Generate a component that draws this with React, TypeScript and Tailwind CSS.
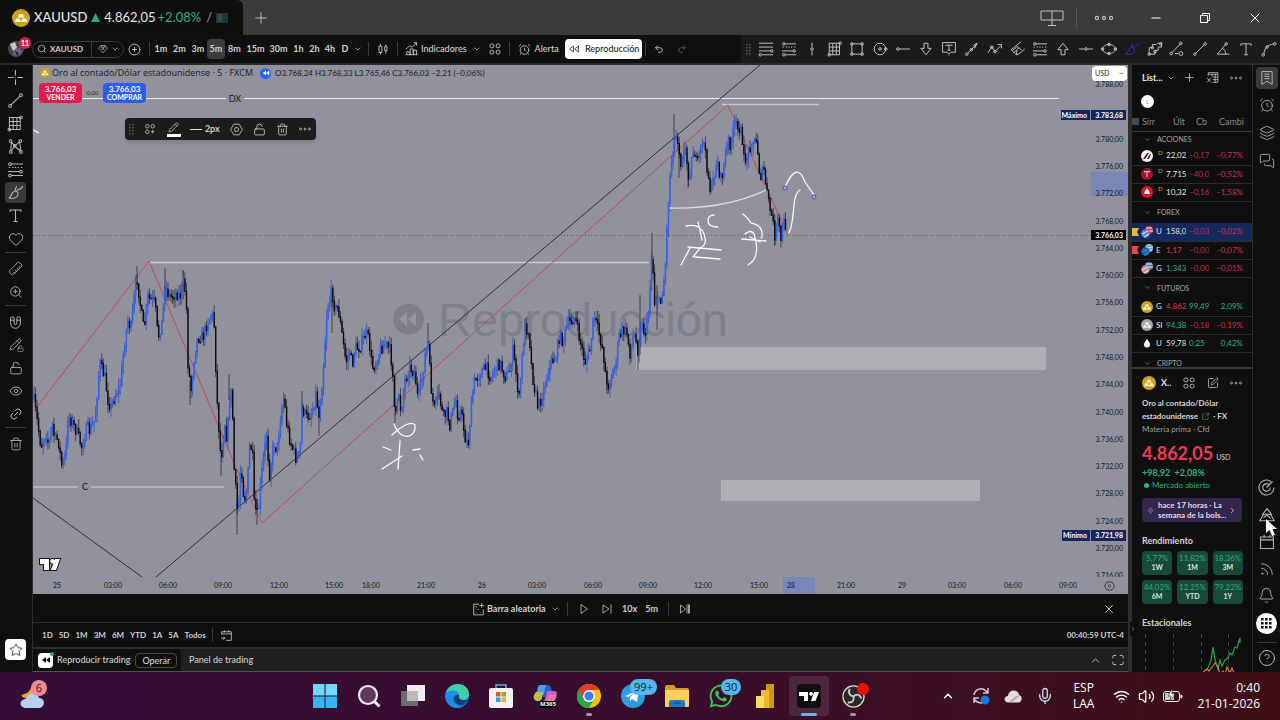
import { ReactNode, useState } from "react";
import clsx from "clsx";
import {
  AlarmClock,
  ChevronDown,
  ChevronRight,
  ChevronUp,
  CircleHelp,
  CirclePlus,
  Eye,
  Heart,
  Layers,
  Link2,
  LockOpen,
  Magnet,
  MessagesSquare,
  Mic,
  Minus,
  Pencil,
  Plus,
  Redo2,
  Rss,
  Ruler,
  Search,
  SquarePen,
  Star,
  Trash2,
  Undo2,
  Volume2,
  Wifi,
  X,
  Zap,
  ZoomIn,
  Bell,
} from "lucide-react";
import { FaWhatsapp } from "react-icons/fa";

type Point = [number, number];

// line glyphs on a 28 unit grid: strokes plus small ring handles
const glyphs: Record<string, { d: string; dots?: Point[] }> = {
  cross: { d: "M14 3v8M14 17v8M3 14h8M17 14h8M14 13.5v1" },
  trend: { d: "M7.5 20.5l13-13", dots: [[6, 22], [22, 6]] },
  grid: { d: "M5 5h16v18H5zM5 11h16M5 17h16M10.500 5v18M16 5v18", dots: [[22, 5], [5, 23]] },
  pattern: { d: "M7 20L8 8l5 5 7-6 2 13M7 21l6-7 9 7", dots: [[7, 22], [7, 6], [13, 13], [21, 6], [22, 22]] },
  levels: { d: "M3 5h22M3 11h22M3 17h18M8 23h17", dots: [[23, 17], [5, 23]] },
  range: { d: "M8 6h17M4 11h2M9 11h2M13 11h2M17 11h2M22 11h2M3 17h17M8 23h17", dots: [[6, 6], [22, 17], [6, 23]] },
  brush: { d: "M4 22c4 0 3-9 9-10 4-1 6 4 4 7-2 4-9 4-13 3zM16 12c0-4 3 1 9-7M14 12c-1-3 1-6 2-7" },
  text: { d: "M6 9V6h16v3M14 6v17M11 23h6" },
  vline: { d: "M14 4v7M14 17v7", dots: [[14, 14]] },
  rect: { d: "M6 6h16v16H6z", dots: [[6, 6], [22, 6], [6, 22], [22, 22]] },
  circle: { d: "M23 14a9 9 0 1 1-18 0a9 9 0 1 1 18 0z", dots: [[14, 14], [23, 14]] },
  hray: { d: "M8 14h17", dots: [[6, 14]] },
  down: { d: "M11 5h6v8h5l-8 10-8-10h5z" },
  up: { d: "M11 23h6v-8h5L14 5 6 15h5z" },
  note: { d: "M4 4h20v15h-7l-3 3-3-3H4zM9 9V8h10v1M14 8v8M12 16h4M14 24v1" },
  arrow: { d: "M7.500 20.500L22 6M15 9l7-4-4 8", dots: [[6, 22], [13, 15]] },
  wave: { d: "M3 20l6-9 5 7 9-9M18 7h6v6", dots: [[9, 11], [14, 18]] },
  fan: { d: "M20 3L5 15l8 8c4 0 8-5 13-9M7 16l8-6 6 6M9 20l8-8M13 23l1-7" },
  hline: { d: "M3 14h8M17 14h8", dots: [[14, 14]] },
  ellipse: { d: "M24 14c0 4-5 7-10 7S4 18 4 14s5-7 10-7 10 3 10 7z", dots: [[4, 14], [24, 14], [14, 7], [14, 21]] },
  path: { d: "M5 22V12h5V7h6l2-2h6v6h-5v5h-5v6z", dots: [[5, 22], [10, 12], [14, 18], [23, 6]] },
  channel: { d: "M6 20L19 6M11 21h5M23 21a3 3 0 1 1-6 0a3 3 0 1 1 6 0z", dots: [[5, 21], [20, 5]] },
  angle: { d: "M24 22H5L19 6M13 13c4 2 5 5 5 9", dots: [[19, 6]] },
  arc: { d: "M6 22C7 12 11 8 22 6", dots: [[5, 23], [11, 11], [23, 6]] },
  candles: { d: "M7 9h5v11H7zM9.500 5v4M9.500 20v4M17 10h4v7h-4zM19 6v4M19 17v5" },
  indicators: { d: "M5 24v-5h5v5M11 24V14h5v10M17 24v-8h5v8M3 24h21M4 14l6-6 4 3 8-8M17 3h5v5" },
  appsRound: {
    d: "M12 8.500a3.500 3.500 0 1 1-7 0a3.500 3.500 0 1 1 7 0zM23 8.500a3.500 3.500 0 1 1-7 0a3.500 3.500 0 1 1 7 0zM12 19.500a3.500 3.500 0 1 1-7 0a3.500 3.500 0 1 1 7 0zM23 19.500a3.500 3.500 0 1 1-7 0a3.500 3.500 0 1 1 7 0z",
  },
  addTemplate: {
    d: "M12 8.500a3.500 3.500 0 1 1-7 0a3.500 3.500 0 1 1 7 0zM23 8.500a3.500 3.500 0 1 1-7 0a3.500 3.500 0 1 1 7 0zM12 19.500a3.500 3.500 0 1 1-7 0a3.500 3.500 0 1 1 7 0zM19.500 16v7M16 19.500h7",
  },
  settings: { d: "M9 4h10l6 10-6 10H9L3 14zM18 14a4 4 0 1 1-8 0a4 4 0 1 1 8 0z" },
  more: { d: "", dots: [[5, 14], [14, 14], [23, 14]] },
  gem: { d: "M9 6h10l5 6-10 11L4 12zM11 10l3 6 3-6M9 6l2 4h6l2-4" },
  rewind: { d: "M13 8v12l-8-6zM23 8v12l-8-6z" },
  table: { d: "M6 11V5h18v18H14M6 8h18M24 13H14M24 18H14M19 8v15M13 8v4M4 15l7 8M11 15l-7 8" },
  bookmark: { d: "M6 4h16v20l-8-5-8 5zM10 8h8M10 11.500h8M10 15h8" },
  radar: { d: "M24 14a10 10 0 1 1-4-8M19 14a5 5 0 1 1-2-4M14 14l8-8" },
  pine: { d: "M14 5l-6 8h12zM9 13l-5 9h20l-5-9M9 18l5-4 5 5" },
  calendar: { d: "M5 7h18v16H5zM5 11h18M10 4v4M18 4v4" },
  calendarGo: { d: "M5 12V7h18v16H13M5 11h18M10 4v4M18 4v4M4 19h7M8 16l3 3-3 3" },
  random: { d: "M15 4H5v20h18V14M20 2v9M15.500 6.500h9M8 8l3 2M13 13l1 2M18 19l1 1M8 18l2 2M9 13v1" },
  play: { d: "M8 5v18l13-9z" },
  step: { d: "M6 6v16l12-8zM22 5v18" },
  live: { d: "M5 6v16l10-8zM18 5v18M21 5v18M23 5v18" },
  maximize: { d: "M5 11V8q0-2 2-2h4M17 6h4q2 0 2 2v3M23 17v3q0 2-2 2h-4M11 22H7q-2 0-2-2v-3" },
  external: { d: "M12 6H5v17h17v-8M16 4h8v8M24 4L14 14" },
};

function Glyph({ name, className = "size-[18px]" }: { name: string; className?: string }) {
  const glyph = glyphs[name];
  return (
    <svg viewBox="0 0 28 28" className={clsx("shrink-0", className)} fill="none" stroke="currentColor" strokeWidth="1.5" aria-hidden="true">
      <path d={glyph.d} />
      {glyph.dots?.map(([x, y], i) => <circle key={i} cx={x} cy={y} r="2" />)}
    </svg>
  );
}

function GoldIcon({ className, color = "#cfa21c" }: { className: string; color?: string }) {
  return (
    <svg viewBox="0 0 20 20" className={clsx("shrink-0", className)} aria-hidden="true">
      <circle cx="10" cy="10" r="10" fill={color} />
      <path d="M8 5.500h4l1.500 4h-7zM4.500 10.500h4l1.500 4H3zM11.500 10.500h4l1.500 4h-7z" fill="#fff6da" />
    </svg>
  );
}

function Divider() {
  return <span className="h-[14px] w-px shrink-0 bg-[#3c3c3c]" />;
}

function TitleBar() {
  return (
    <header className="flex h-[35px] shrink-0 bg-[#3b3b3b] text-[#c4c4c4]">
      <div className="flex w-[243px] shrink-0 items-center rounded-tr-md bg-[#0e0e0e] pl-3 text-[13px] text-[#e4e4e4]">
        <GoldIcon className="size-[18px]" />
        <span className="ml-1 font-medium">XAUUSD</span>
        <svg viewBox="0 0 10 10" className="mx-1 size-[9px]" aria-hidden="true">
          <path d="M5 0l5 10H0z" fill="#22ab7d" />
        </svg>
        <span>4.862,05</span>
        <span className="ml-[2px] text-[#2bb17f]">+2.08%</span>
        <span className="ml-[5px] text-[#9a9a9a]">/</span>
        <svg viewBox="0 0 12 10" className="ml-1 h-[10px] w-3" aria-hidden="true">
          <path d="M0 0h12v10H0z" fill="#26323a" />
          <path d="M2 1h4v8H2z" fill="#2f4d50" />
        </svg>
      </div>
      <button type="button" aria-label="Nueva pestaña" className="flex w-[35px] items-center justify-center">
        <Plus className="size-[18px]" strokeWidth={1.2} />
      </button>
      <div className="ml-auto flex items-center">
        <button type="button" aria-label="Pantallas" className="flex w-10 justify-center">
          <svg viewBox="0 0 24 18" className="h-[18px] w-6" fill="none" stroke="currentColor" aria-hidden="true">
            <path d="M1 2h22v9H1zM12 2v14M8 16.500h8" />
          </svg>
        </button>
        <span className="ml-1 h-5 w-px bg-[#555]" />
        <button type="button" aria-label="Más" className="flex w-[54px] justify-center">
          <Glyph name="more" className="size-[22px]" />
        </button>
        <button type="button" aria-label="Minimizar" className="flex w-[49px] justify-center text-white">
          <Minus className="size-[14px]" />
        </button>
        <button type="button" aria-label="Restaurar" className="flex w-[50px] justify-center text-white">
          <svg viewBox="0 0 12 12" className="size-3" fill="none" stroke="currentColor" aria-hidden="true">
            <path d="M1.500 3.500h7v7h-7zM3.500 3V1.500h7v7H9" />
          </svg>
        </button>
        <button type="button" aria-label="Cerrar" className="flex w-[50px] justify-center text-white">
          <X className="size-4" strokeWidth={1.5} />
        </button>
      </div>
    </header>
  );
}

const intervals = [
  { label: "1m", width: "w-[18px]" },
  { label: "2m", width: "w-[19px]" },
  { label: "3m", width: "w-[18px]" },
  { label: "5m", width: "w-[18px]" },
  { label: "8m", width: "w-[19px]" },
  { label: "15m", width: "w-[23px]" },
  { label: "30m", width: "w-[23px]" },
  { label: "1h", width: "w-[17px]" },
  { label: "2h", width: "w-[15px]" },
  { label: "4h", width: "w-[16px]" },
  { label: "D", width: "w-[14px]" },
];

const favourites = [
  "levels", "range", "vline", "grid", "rect", "circle", "hray", "down", "note", "arrow", "wave", "fan",
  "range", "up", "hline", "ellipse", "brush", "path", "channel", "trend", "angle", "text", "arc",
];

function Toolbar() {
  const [interval, setActiveInterval] = useState("5m");

  return (
    <div className="flex h-7 shrink-0 items-center bg-[#0f0f0f] text-[9px] font-bold text-[#cfcfcf]">
      <button type="button" aria-label="Perfil" className="relative ml-2 size-4 shrink-0">
        <svg viewBox="0 0 16 16" className="size-4" aria-hidden="true">
          <circle cx="8" cy="8" r="8" fill="#4a4350" />
          <path d="M2 3l5-2 2 6-4 3z" fill="#d0c0b8" />
          <path d="M6 9l6-2 2 4-4 4-5-1z" fill="#6f6488" />
          <path d="M7 10l4 2-2 3z" fill="#1d1722" />
        </svg>
        <span className="absolute -top-1 left-[11px] flex size-3 items-center justify-center rounded-full bg-[#d6204e] text-[7px] text-white">
          11
        </span>
      </button>
      <div className="ml-2 flex h-[17px] w-[92px] shrink-0 items-center rounded-full border border-[#3a3a3a]">
        <button type="button" className="flex h-full w-[59px] items-center gap-[3px] border-r border-[#3a3a3a] pl-1 text-[8px]">
          <Search className="size-[10px] shrink-0" strokeWidth={1.8} />
          XAUUSD
        </button>
        <button type="button" aria-label="Símbolos" className="flex flex-1 items-center justify-center gap-[2px]">
          <Glyph name="gem" className="size-3" />
          <ChevronDown className="size-2" />
        </button>
      </div>
      <button type="button" aria-label="Comparar" className="flex w-[21px] justify-center">
        <CirclePlus className="size-[13px]" strokeWidth={1.6} />
      </button>
      <span className="ml-1 mr-[2px]">
        <span className="block h-[14px] w-px bg-[#3c3c3c]" />
      </span>
      {intervals.map(({ label, width }) => (
        <button
          key={label}
          type="button"
          onClick={() => setActiveInterval(label)}
          className={clsx("h-5 shrink-0 rounded text-center", width, interval === label && "bg-[#3d3d3d]")}
        >
          {label}
        </button>
      ))}
      <button type="button" aria-label="Más intervalos" className="mr-1 flex w-3 justify-center">
        <ChevronDown className="size-2" />
      </button>
      <Divider />
      <button type="button" aria-label="Velas" className="flex w-7 justify-center">
        <Glyph name="candles" className="size-4" />
      </button>
      <Divider />
      <button type="button" className="ml-[6px] flex shrink-0 items-center gap-px font-medium">
        <Glyph name="indicators" className="size-4" />
        Indicadores
      </button>
      <button type="button" aria-label="Favoritos" className="ml-[2px] flex w-4 justify-center">
        <ChevronDown className="size-2" />
      </button>
      <button type="button" aria-label="Plantillas" className="flex w-[21px] justify-center">
        <Glyph name="appsRound" className="size-4" />
      </button>
      <span className="ml-[3px]">
        <span className="block h-[14px] w-px bg-[#3c3c3c]" />
      </span>
      <button type="button" className="ml-2 flex shrink-0 items-center gap-1 font-medium">
        <AlarmClock className="size-[13px]" strokeWidth={1.5} />
        Alerta
      </button>
      <button
        type="button"
        className="ml-[6px] mr-[3px] flex h-5 w-[77px] shrink-0 items-center justify-center gap-1 rounded bg-white font-medium text-[#1b1b1b]"
      >
        <Glyph name="rewind" className="size-[14px]" />
        Reproducción
      </button>
      <Divider />
      <button type="button" aria-label="Deshacer" className="flex w-[26px] justify-center">
        <Undo2 className="size-[10px]" />
      </button>
      <button type="button" aria-label="Rehacer" className="flex w-5 justify-center text-[#5c5c5c]">
        <Redo2 className="size-[10px]" />
      </button>
      <div className="ml-auto flex h-7 w-[539px] shrink-0 items-center bg-[#1b1b1b] pl-[5px]">
        <Grip />
        <div className="ml-1 flex flex-1 justify-between">
          {favourites.map((name, i) => (
            <button
              key={i}
              type="button"
              aria-label={name}
              className={clsx("flex w-[22px] justify-center", name === "brush" ? "text-[#3434c4]" : "text-[#c4c4c4]")}
            >
              <Glyph name={name} className="size-[18px]" />
            </button>
          ))}
        </div>
      </div>
    </div>
  );
}

function Grip() {
  return (
    <svg viewBox="0 0 5 11" className="h-[11px] w-[5px] shrink-0" fill="#5a5a5a" aria-hidden="true">
      <path d="M0 0h1.500v1.500H0zM3 0h1.500v1.500H3zM0 3h1.500v1.500H0zM3 3h1.500v1.500H3zM0 6h1.500v1.500H0zM3 6h1.500v1.500H3zM0 9h1.500v1.500H0zM3 9h1.500v1.500H3z" />
    </svg>
  );
}

function Tool({ label, active, children }: { label: string; active?: boolean; children: ReactNode }) {
  return (
    <button type="button" aria-label={label} className="flex h-[23px] items-center justify-center">
      <span className={clsx("flex size-[21px] items-center justify-center rounded", active && "bg-[#3a3a3a]")}>{children}</span>
    </button>
  );
}

function DrawingTools() {
  return (
    <aside className="flex w-[33px] shrink-0 flex-col border-r border-[#2c2c2c] bg-[#0f0f0f] pr-px pt-px text-[#b8b8b8]">
      {["cross", "trend", "grid", "pattern", "range", "brush", "text"].map((name) => (
        <Tool key={name} label={name} active={name === "brush"}>
          <Glyph name={name} className="size-[19px]" />
        </Tool>
      ))}
      <Tool label="Iconos">
        <Heart className="size-4" strokeWidth={1.3} />
      </Tool>
      <span className="mx-[5px] mb-1 mt-[2px] h-px bg-[#3a3a3a]" />
      <Tool label="Medir">
        <Ruler className="size-[15px] rotate-90" strokeWidth={1.4} />
      </Tool>
      <Tool label="Ampliar">
        <ZoomIn className="size-[14px]" strokeWidth={1.5} />
      </Tool>
      <span className="mx-[5px] mb-1 mt-[2px] h-px bg-[#3a3a3a]" />
      <Tool label="Imán">
        <Magnet className="size-[15px] rotate-[135deg]" strokeWidth={1.4} />
      </Tool>
      <Tool label="Modo dibujo">
        <span className="relative">
          <Pencil className="size-[13px]" strokeWidth={1.5} />
          <LockOpen className="absolute -bottom-px -right-[2px] size-[7px]" />
        </span>
      </Tool>
      <Tool label="Bloquear">
        <LockOpen className="size-[14px]" strokeWidth={1.5} />
      </Tool>
      <Tool label="Ocultar">
        <Eye className="size-[14px]" strokeWidth={1.5} />
      </Tool>
      <Tool label="Vincular">
        <Link2 className="size-[14px] -rotate-45" strokeWidth={1.6} />
      </Tool>
      <span className="mx-[5px] mb-1 mt-[2px] h-px bg-[#3a3a3a]" />
      <Tool label="Eliminar">
        <Trash2 className="size-[14px]" strokeWidth={1.4} />
      </Tool>
      <button
        type="button"
        aria-label="Barra de favoritos"
        className="mx-auto mb-3 mt-auto flex size-[21px] items-center justify-center rounded bg-white text-[#1b1b1b]"
      >
        <Star className="size-[14px]" strokeWidth={1.4} />
      </button>
    </aside>
  );
}

const priceTrack: Point[] = [
  [34, 400], [36, 413], [41, 446], [46, 433], [49, 445], [52, 422], [55, 440], [58, 438], [62, 467], [66, 453],
  [68, 415], [71, 420], [76, 430], [80, 441], [82, 447], [87, 427], [90, 431], [95, 420], [98, 383], [100, 363],
  [105, 378], [108, 400], [111, 407], [115, 395], [120, 387], [125, 340], [128, 320], [131, 328], [134, 300],
  [137, 277], [141, 310], [144, 330], [148, 297], [155, 303], [158, 338], [162, 322], [165, 286], [170, 297],
  [176, 293], [180, 296], [183, 282], [186, 293], [188, 363], [191, 390], [195, 350], [198, 337], [203, 337],
  [207, 323], [212, 313], [214, 320], [217, 400], [221, 460], [225, 423], [227, 440], [230, 393], [232, 393],
  [234, 467], [238, 517], [241, 460], [244, 500], [247, 490], [250, 440], [253, 460], [254, 503], [258, 517],
  [261, 480], [264, 453], [267, 430], [269, 478], [274, 443], [277, 450], [281, 413], [284, 395], [286, 420],
  [290, 440], [296, 458], [300, 455], [302, 407], [306, 417], [312, 413], [316, 393], [319, 417], [323, 373],
  [327, 310], [332, 290], [335, 310], [338, 307], [341, 327], [346, 362], [350, 350], [352, 366], [355, 348],
  [360, 347], [366, 333], [369, 340], [372, 367], [375, 365], [380, 350], [385, 343], [390, 350], [393, 373],
  [395, 422], [399, 393], [401, 412], [405, 380], [410, 367], [415, 373], [418, 400], [422, 380], [425, 357],
  [428, 342], [431, 387], [434, 410], [439, 393], [443, 417], [447, 412], [450, 425], [453, 412], [456, 400],
  [458, 417], [461, 410], [465, 437], [468, 445], [471, 410], [474, 383], [477, 377], [486, 367], [491, 377],
  [496, 367], [500, 363], [506, 378], [510, 370], [513, 350], [516, 373], [519, 400], [522, 360], [525, 327],
  [529, 330], [532, 373], [538, 407], [543, 393], [550, 363], [556, 357], [559, 337], [563, 340], [568, 323],
  [575, 317], [580, 340], [585, 362], [590, 350], [594, 315], [599, 333], [603, 350], [607, 388], [615, 367],
  [619, 337], [623, 330], [627, 333], [630, 353], [634, 333], [638, 350], [641, 323], [645, 333], [648, 320],
  [652, 250], [655, 310], [657, 293], [660, 307], [663, 287], [665, 273], [668, 207], [670, 177], [673, 147],
  [677, 133], [681, 163], [685, 147], [689, 177], [694, 147], [697, 167], [703, 138], [708, 173], [711, 194],
  [717, 160], [721, 180], [725, 160], [728, 140], [731, 145], [735, 123], [738, 130], [741, 122], [743, 160],
  [747, 157], [751, 142], [757, 142], [760, 177], [764, 170], [768, 200], [772, 217], [775, 236], [778, 220],
  [781, 240], [783, 223], [785, 222], [787, 236],
];

// isolated long wicks: x, top, bottom
const longWicks: [number, number, number][] = [
  [137, 266, 290], [165, 268, 300], [183, 270, 300], [190, 380, 405], [221, 455, 476], [229, 374, 400], [237, 500, 535],
  [257, 500, 525], [302, 391, 410], [319, 412, 436], [332, 290, 333], [395, 375, 423], [428, 323, 345], [439, 384, 400],
  [525, 318, 330], [607, 370, 394], [640, 295, 355], [652, 233, 260], [657, 285, 330], [674, 114, 150], [679, 150, 178],
  [688, 165, 188], [775, 220, 245], [638, 340, 370],
];

const buildCandles = () => {
  let seed = 7;
  const random = () => {
    seed = (seed * 16807) % 2147483647;
    return seed / 2147483647;
  };

  const out = { upBody: "", downBody: "", upWick: "", downWick: "" };
  let index = 0;
  let previous = priceTrack[0][1];
  for (let x = 34; x <= 787; x += 1.54) {
    while (index < priceTrack.length - 2 && priceTrack[index + 1][0] < x) index++;
    const [x0, y0] = priceTrack[index];
    const [x1, y1] = priceTrack[index + 1];
    const target = y0 + ((y1 - y0) * (x - x0)) / (x1 - x0);
    const close = target + (random() - 0.5) * 12;
    const high = Math.min(previous, close) - random() * 9;
    const low = Math.max(previous, close) + random() * 9;
    const at = x.toFixed(1);
    const body = `M${at} ${previous.toFixed(1)}V${(close + (close < previous ? -1 : 1)).toFixed(1)}`;
    const wick = `M${at} ${high.toFixed(1)}V${low.toFixed(1)}`;
    if (close < previous) {
      out.upBody += body;
      out.upWick += wick;
    } else {
      out.downBody += body;
      out.downWick += wick;
    }
    previous = close;
  }
  return out;
};

const candles = buildCandles();

const prices: [string, number][] = [
  ["3.788,00", 87], ["3.780,00", 142], ["3.776,00", 169], ["3.772,00", 196], ["3.768,00", 224], ["3.764,00", 251],
  ["3.760,00", 278], ["3.756,00", 305], ["3.752,00", 333], ["3.748,00", 360], ["3.744,00", 387], ["3.740,00", 415],
  ["3.736,00", 442], ["3.732,00", 469], ["3.728,00", 496], ["3.724,00", 524], ["3.720,00", 551], ["3.716,00", 578],
];

const times: [string, number][] = [
  ["25", 57], ["03:00", 113], ["06:00", 168], ["09:00", 223], ["12:00", 279], ["15:00", 334], ["18:00", 371], ["21:00", 426],
  ["26", 482], ["03:00", 537], ["06:00", 593], ["09:00", 648], ["12:00", 703], ["15:00", 759], ["28", 791], ["21:00", 846],
  ["29", 902], ["03:00", 957], ["06:00", 1013], ["09:00", 1068],
];

function PriceChart() {
  return (
    <svg viewBox="33 65 1095 529" preserveAspectRatio="xMinYMin slice" className="block h-full w-full" role="img" aria-label="Gráfico de XAUUSD">
      <path d="M33 65h1095v529H33z" fill="#91929c" />

      <g fill="#7e7f89">
        <path d="M424 319a15.500 15.500 0 1 1-31 0a15.500 15.500 0 1 1 31 0z" />
        <path d="M407 312v14l-8-7zM416 312v14l-8-7z" fill="#94959f" />
        <text x="438" y="336" fontSize="47" fontFamily="Liberation Sans, sans-serif">
          Reproducción
        </text>
      </g>

      <path d="M636 347h410v23H636zM721 480h259v21H721z" fill="#afb0b5" />

      <path d="M33 235.500H1090" stroke="#5d5e66" strokeDasharray="1 2" />
      <g stroke="#e9e9ee">
        <path d="M33 98.500h193M244 98.500h815" strokeWidth="1.200" />
        <path d="M149 262.500h500M722 104.500h97" stroke="#c9c9cf" strokeWidth="1.700" />
        <path d="M33 487h45M91 487h133" stroke="#bfc0c7" strokeWidth="1.700" />
        <path d="M33 130l6 3" strokeWidth="1.500" />
      </g>

      <g fill="none" strokeWidth="0.900">
        <path d="M33 498l109 79M156 577L760 65" stroke="#26262c" />
        <path d="M34 411L149 261l88 209 25 53L728 105l60 130" stroke="#c73f58" />
      </g>

      <g fill="none">
        <path d={candles.upWick} stroke="#3350b8" strokeWidth="0.800" />
        <path d={candles.downWick} stroke="#25262f" strokeWidth="0.700" />
        <path d={longWicks.map(([x, top, bottom]) => `M${x} ${top}V${bottom}`).join("")} stroke="#2b2d3a" strokeWidth="0.800" />
        <path d={candles.upBody} stroke="#3560ee" strokeWidth="1.500" />
        <path d={candles.downBody} stroke="#0b0c16" strokeWidth="1.400" />
      </g>

      {/* freehand notes */}
      <g fill="none" stroke="#fafafa" strokeWidth="1.300" strokeLinecap="round">
        <path d="M670 208q56 1 96-18" stroke="#dcdce2" />
        <path d="M686 226q14-3 18 8t-4 14l-7 9M698 222q2 9 4 18M714 215q-6 0-6 6t10 6M688 247l33 3M695 257l25 2M690 248l-9 17" />
        <path d="M743 214q5 4 8 9c9 2 12 6 11 14l-1 1M745 234q6-5 9 0 4 11 2 20-1 7-8 11M742 239l24 2M750 237l10 5" />
        <path d="M789 233c7-15 2-38 11-43M785 187q12-27 20-5l9 13" />
        <path d="M394 424q3 8 8 11c8 4 14-2 13-10-4-5-16 3-23 10M400 441l-2 28M383 447l8 3M382 469l20-13M413 450l7-1M420 455l3 5" />
      </g>
      <g fill="#aab0d4" stroke="#4453a8">
        <circle cx="785" cy="188" r="2" />
        <circle cx="814" cy="197" r="2" />
      </g>

      <g fontSize="9" fill="#16161a" textAnchor="middle">
        <text x="235" y="102">DX</text>
        <text x="85" y="490">C</text>
      </g>

      <path d="M1091 172h37v24h-37zM783 577h32v17h-32z" fill="#7b86b8" />
      <g fontSize="7" fill="#16161a" textAnchor="end">
        {prices.map(([price, y]) => (
          <text key={price} x="1123" y={y}>
            {price}
          </text>
        ))}
      </g>
      <path d="M1088 577h40v17h-40z" fill="#91929c" />
      <g fontSize="7" fill="#16161a" textAnchor="middle">
        {times.map(([time, x]) => (
          <text key={x} x={x} y="588">
            {time}
          </text>
        ))}
      </g>
      <path d="M1107 582h5l2.500 4-2.500 4h-5l-2.500-4z" fill="none" stroke="#33343a" strokeWidth="0.900" />
      <circle cx="1109.500" cy="586" r="1.200" fill="none" stroke="#33343a" strokeWidth="0.700" />

      <g fontSize="7" fontWeight="700" fill="#fff" textAnchor="end">
        <path d="M1061 110h65v10h-65zM1062 530h64v11h-64z" fill="#13265f" />
        <path d="M1090.500 110v10M1090.500 530v11" stroke="#7f8db8" />
        <path d="M1091 230h35v10h-35z" fill="#000" />
        <text x="1087" y="118">Máximo</text>
        <text x="1123" y="118">3.783,68</text>
        <text x="1087" y="538">Mínimo</text>
        <text x="1123" y="538">3.721,98</text>
        <text x="1123" y="238">3.766,03</text>
      </g>

      {/* logo */}
      <path d="M40 559h9v11h-5v-6h-4zM52.500 559a2.300 2.300 0 1 1-.1 0zM55 559h5l-4 11h-5z" fill="#fff" stroke="#16161a" strokeWidth="2" paintOrder="stroke" />
    </svg>
  );
}

function ChartArea() {
  return (
    <div className="relative min-h-0 flex-1">
      <PriceChart />
      <div className="absolute left-[7px] top-[2px] text-[#1a1a1f]">
        <div className="flex h-3 items-center whitespace-nowrap">
          <GoldIcon className="mr-[2px] size-[10px]" />
          <span className="font-['Open_Sans',sans-serif] text-[9px]">Oro al contado/Dólar estadounidense · 5 · FXCM</span>
          <span className="ml-[7px] mr-1 flex size-[11px] items-center justify-center rounded-full bg-[#2962ff] text-white">
            <svg viewBox="0 0 10 10" className="size-[8px]" aria-hidden="true">
              <path d="M5 2v6L1 5zM9 2v6L5 5z" fill="#fff" />
            </svg>
          </span>
          <span className="flex gap-[2px] text-[8px]">
            <span>O3.768,24</span>
            <span>H3.768,33</span>
            <span>L3.765,46</span>
            <span>C3.766,03</span>
            <span>−2,21 (−0,06%)</span>
          </span>
        </div>
        <div className="mt-1 flex items-center text-[8px] font-bold leading-2 text-white">
          <button type="button" className="-ml-px h-5 w-[43px] rounded-sm bg-[#e6194b]">
            3.766,03
            <span className="block text-[7px]">VENDER</span>
          </button>
          <span className="w-[21px] text-center text-[6px] font-normal text-[#2b2b30]">0,00</span>
          <button type="button" className="h-5 w-[43px] rounded-sm bg-[#2c5cf5]">
            3.766,03
            <span className="block text-[7px]">COMPRAR</span>
          </button>
        </div>
      </div>

      <div
        role="toolbar"
        className="absolute left-[92px] top-[53px] flex h-[22px] w-[191px] items-center justify-between rounded bg-[#1c1c1c] px-1 text-[9px] font-bold text-[#cfcfcf] shadow-md"
      >
        <Grip />
        <button type="button" aria-label="Plantilla">
          <Glyph name="addTemplate" className="size-[14px]" />
        </button>
        <button type="button" aria-label="Color" className="flex flex-col items-center">
          <Pencil className="size-[11px]" strokeWidth={1.5} />
          <span className="mt-px h-[3px] w-[14px] bg-white" />
        </button>
        <button type="button" className="flex items-center gap-[3px]">
          <span className="h-px w-3 bg-[#e0e0e0]" />
          2px
        </button>
        <button type="button" aria-label="Configuración">
          <Glyph name="settings" className="size-[15px]" />
        </button>
        <button type="button" aria-label="Bloquear">
          <LockOpen className="size-[13px]" strokeWidth={1.5} />
        </button>
        <button type="button" aria-label="Eliminar">
          <Trash2 className="size-[13px]" strokeWidth={1.5} />
        </button>
        <button type="button" aria-label="Más">
          <Glyph name="more" className="size-[14px]" />
        </button>
      </div>

      <div className="absolute right-[1px] top-[1px] flex items-center">
        <select aria-label="Divisa" className="h-[15px] w-[35px] appearance-none rounded-sm bg-white pl-[3px] text-[7px] text-[#1b1b1b]">
          <option>USD</option>
        </select>
        <ChevronDown className="pointer-events-none absolute right-[3px] size-[5px] text-black" strokeWidth={3} />
      </div>
    </div>
  );
}

function BottomBars() {
  return (
    <div className="shrink-0 bg-[#0f0f0f] text-[9px] font-bold text-[#cfcfcf]">
      <div className="flex h-[29px] items-center border-b border-[#2e2e2e] pt-[2px]">
        <div className="ml-[40%] flex items-center">
          <button type="button" className="flex items-center gap-px">
            <Glyph name="random" className="size-[15px]" />
            Barra aleatoria
            <ChevronDown className="ml-1 size-2" />
          </button>
          <span className="ml-[8px] h-[14px] w-px bg-[#3c3c3c]" />
          <button type="button" aria-label="Reproducir" className="flex w-8 justify-center">
            <Glyph name="play" className="size-[14px]" />
          </button>
          <button type="button" aria-label="Adelante" className="flex w-[14px] justify-center">
            <Glyph name="step" className="size-[14px]" />
          </button>
          <button type="button" className="ml-[6px] w-5">10x</button>
          <button type="button" className="ml-[2px] w-5">5m</button>
          <span className="mx-[6px] h-[14px] w-px bg-[#3c3c3c]" />
          <button type="button" aria-label="Tiempo real" className="flex w-5 justify-center">
            <Glyph name="live" className="size-[14px]" />
          </button>
        </div>
        <button type="button" aria-label="Cerrar reproducción" className="ml-auto mr-3">
          <X className="size-[14px]" strokeWidth={1.6} />
        </button>
      </div>
      <div className="flex h-[26px] items-center gap-[6px] border-b-2 border-[#2e2e2e] pl-[9px] text-[8px]">
        {["1D", "5D", "1M", "3M", "6M", "YTD", "1A", "5A", "Todos"].map((range) => (
          <button key={range} type="button">
            {range}
          </button>
        ))}
        <Divider />
        <button type="button" aria-label="Ir a">
          <Glyph name="calendarGo" className="size-[15px]" />
        </button>
        <span className="ml-auto mr-1">00:40:59 UTC-4</span>
      </div>
      <div className="flex h-[23px] items-center border-b border-[#5a4a52] bg-[#202020]">
        <div className="flex h-full w-[148px] items-center bg-[#101010] pl-[5px]">
          <span className="relative mr-1 flex size-[15px] items-center justify-center rounded-sm bg-white">
            <svg viewBox="0 0 10 10" className="size-[10px]" aria-hidden="true">
              <path d="M5 2v6L1 5zM9 2v6L5 5z" fill="#111" />
            </svg>
            <span className="absolute -right-px -top-px size-1 rounded-full bg-[#22ab7d]" />
          </span>
          <span className="font-medium">Reproducir trading</span>
          <button type="button" className="ml-[5px] h-[15px] w-[42px] rounded border border-[#4a4a4a] font-medium">
            Operar
          </button>
        </div>
        <button type="button" className="ml-2 font-medium">Panel de trading</button>
        <button type="button" aria-label="Abrir panel" className="ml-auto mr-2">
          <ChevronUp className="size-[13px]" strokeWidth={1.5} />
        </button>
        <button type="button" aria-label="Maximizar panel" className="mr-[2px]">
          <Glyph name="maximize" className="size-4" />
        </button>
      </div>
    </div>
  );
}

interface Row {
  name: string;
  delayed?: boolean;
  flag?: string;
  icon: ReactNode;
  last: string;
  lastColor: string;
  change: string;
  percent: string;
  up?: boolean;
  selected?: boolean;
}

function Pair({ back, front, stripe }: { back: string; front: string; stripe: string }) {
  return (
    <svg viewBox="0 0 12 12" className="size-3 shrink-0" aria-hidden="true">
      <circle cx="8" cy="4" r="4" fill={back} />
      <path d="M5 2h6M5 5h7" stroke={stripe} />
      <circle cx="4.500" cy="7.500" r="4.200" fill={front} />
      <path d="M1 8l6-3M3 11l5-3" stroke={stripe} />
    </svg>
  );
}

function Coin({ color, d, mark }: { color: string; d: string; mark: string }) {
  return (
    <svg viewBox="0 0 12 12" className="size-3 shrink-0" aria-hidden="true">
      <circle cx="6" cy="6" r="6" fill={color} />
      <path d={d} fill={mark} />
    </svg>
  );
}

const groups: { title: string; height: string; rows: Row[] }[] = [
  {
    title: "ACCIONES",
    height: "h-4",
    rows: [
      { name: "", delayed: true, icon: <Coin color="#f0f0f0" d="M2 9l4-6h2L4 9zM6 9l3-5h1L8 9z" mark="#5b2035" />, last: "22,02", lastColor: "text-[#e0e0e0]", change: "−0,17", percent: "−0,77%" },
      { name: "", delayed: true, icon: <Coin color="#9b1535" d="M3 3h6v1L6.500 4.500V9h-1V4.500L3 4z" mark="#f3b6c2" />, last: "7.715", lastColor: "text-[#e0e0e0]", change: "−40,0", percent: "−0,52%" },
      { name: "", delayed: true, icon: <Coin color="#e0102f" d="M6 2l2 3 1 3H3l1-3z" mark="#fff" />, last: "10,32", lastColor: "text-[#e0e0e0]", change: "−0,16", percent: "−1,58%" },
    ],
  },
  {
    title: "FOREX",
    height: "h-[22px]",
    rows: [
      { name: "U", flag: "#e8b93b", icon: <Pair back="#d8334b" front="#5a86d8" stripe="#f4f4f4" />, last: "158,0", lastColor: "text-[#e0e0e0]", change: "−0,03", percent: "−0,02%", selected: true },
      { name: "E", flag: "#ef4452", icon: <Pair back="#c7cfe6" front="#1f5fb8" stripe="#3b8fd0" />, last: "1,17", lastColor: "text-[#e0314f]", change: "−0,00", percent: "−0,07%" },
      { name: "G", icon: <Pair back="#3a8ab0" front="#c98aa8" stripe="#f0e6ee" />, last: "1,343", lastColor: "text-[#2bb17f]", change: "−0,00", percent: "−0,01%" },
    ],
  },
  {
    title: "FUTUROS",
    height: "h-[21px]",
    rows: [
      { name: "G", icon: <GoldIcon className="size-3" />, last: "4.862", lastColor: "text-[#e0314f]", change: "99,49", percent: "2,09%", up: true },
      { name: "SI", icon: <GoldIcon className="size-3" color="#a5a5ad" />, last: "94,38", lastColor: "text-[#2bb17f]", change: "−0,18", percent: "−0,19%" },
      { name: "U", icon: <Coin color="#151515" d="M6 2c2 3 3 4 3 5.500a3 3 0 0 1-6 0C3 6 4 5 6 2z" mark="#fff" />, last: "59,78", lastColor: "text-[#e0e0e0]", change: "0,25", percent: "0,42%", up: true },
    ],
  },
  { title: "CRIPTO", height: "h-[22px]", rows: [] },
];

function Watchlist() {
  return (
    <section className="h-[304px] shrink-0 overflow-hidden border-b-2 border-[#3a3a3a]">
      <div className="flex h-[25px] items-center pl-[10px] text-[#c4c4c4]">
        <button type="button" className="flex items-center gap-1 text-[9px] font-bold text-[#e4e4e4]">
          List...
          <ChevronDown className="size-2" />
        </button>
        <button type="button" aria-label="Añadir símbolo" className="ml-auto flex w-6 justify-center">
          <Plus className="size-[13px]" strokeWidth={1.5} />
        </button>
        <button type="button" aria-label="Vista avanzada" className="flex w-[23px] justify-center">
          <Glyph name="table" className="size-[15px]" />
        </button>
        <button type="button" aria-label="Más" className="mr-1 flex w-6 justify-center">
          <Glyph name="more" className="size-[14px]" />
        </button>
      </div>
      <div className="flex h-[23px] items-center pl-[9px]">
        <span className="flex size-[13px] items-center justify-center rounded-full bg-white text-[6px] text-[#999]">L</span>
      </div>
      <table className="w-full table-fixed text-[8px] leading-[17px]">
        <colgroup>
          <col className="w-[34px]" />
          <col className="w-[22px]" />
          <col className="w-[22px]" />
          <col />
        </colgroup>
        <thead className="text-[9px] text-[#8a8a8a]">
          <tr className="h-[18px] border-b border-[#3a3a3a]">
            <th className="p-0 text-left font-normal">
              <div className="flex items-center gap-[3px]">
                <span className="size-[7px] bg-[#4a4a4a]" />
                <span className="w-[13px] overflow-hidden">Sím</span>
              </div>
            </th>
            <th className="p-0 pr-[3px] text-right font-normal">Últ</th>
            <th className="p-0 pr-[3px] text-right font-normal">Cb</th>
            <th className="p-0 pr-2 text-right font-normal">Cambi</th>
          </tr>
        </thead>
        {groups.map(({ title, height, rows }) => (
          <tbody key={title}>
            <tr className={height}>
              <th colSpan={4} className="p-0 pl-3 text-left align-middle text-[7px] font-normal leading-[12px] text-[#a8a8a8]">
                <span className="flex items-center gap-[6px]">
                  <ChevronDown className="size-[7px]" />
                  {title}
                </span>
              </th>
            </tr>
            {rows.map((row, i) => (
              <tr key={i} className={clsx("h-[18px] border-b border-[#2c2c2c]", row.selected && "bg-[#14295e]")}>
                <td className="p-0">
                  <div className="flex items-center">
                    <span className="w-[9px]">
                      {row.flag ? (
                        <svg viewBox="0 0 7 8" className="h-2 w-[7px]" aria-hidden="true">
                          <path d="M0 0h7L5 4l2 4H0z" fill={row.flag} />
                        </svg>
                      ) : null}
                    </span>
                    {row.icon}
                    {row.delayed ? (
                      <span className="ml-[5px] h-[14px] text-[6px] leading-[8px] text-[#e09a2b]">D</span>
                    ) : (
                      <span className="ml-[3px] w-[7px] overflow-hidden text-[#e0e0e0]">{row.name}</span>
                    )}
                  </div>
                </td>
                <td className="p-0">
                  <div className={clsx("h-[17px] w-[20px] overflow-hidden whitespace-nowrap", row.lastColor)}>{row.last}</div>
                </td>
                <td className="p-0">
                  <div className={clsx("ml-px h-[17px] w-[20px] overflow-hidden whitespace-nowrap", row.up ? "text-[#2bb17f]" : "text-[#c4294a]")}>
                    {row.change}
                  </div>
                </td>
                <td className={clsx("p-0 pr-[9px] text-right", row.up ? "text-[#2bb17f]" : "text-[#d32d50]")}>{row.percent}</td>
              </tr>
            ))}
          </tbody>
        ))}
      </table>
    </section>
  );
}

const performance = [
  ["5,77%", "1W"],
  ["11,82%", "1M"],
  ["18,36%", "3M"],
  ["44,02%", "6M"],
  ["12,25%", "YTD"],
  ["79,22%", "1Y"],
];

function SymbolDetails() {
  return (
    <section className="flex min-h-0 flex-1 flex-col overflow-hidden pl-[10px] text-[8px] text-[#d6d6d6]">
      <div className="flex h-7 shrink-0 items-center text-[#c4c4c4]">
        <GoldIcon className="size-[14px]" />
        <span className="ml-[5px] text-[9px] font-bold text-[#e4e4e4]">X..</span>
        <button type="button" aria-label="Diseño" className="ml-auto flex w-6 justify-center">
          <Glyph name="appsRound" className="size-[16px]" />
        </button>
        <button type="button" aria-label="Nota" className="flex w-[23px] justify-center">
          <SquarePen className="size-3" strokeWidth={1.6} />
        </button>
        <button type="button" aria-label="Más" className="mr-1 flex w-6 justify-center">
          <Glyph name="more" className="size-[14px]" />
        </button>
      </div>
      <h2 className="text-[8px] font-bold leading-[13px]">
        Oro al contado/Dólar
        <span className="flex items-center gap-[3px]">
          estadounidense
          <Glyph name="external" className="size-[9px] text-[#8a8a8a]" />
          <span>· FX</span>
        </span>
      </h2>
      <p className="leading-[13px] text-[#a0a0a0]">Materia prima · Cfd</p>
      <p className="mt-2 flex items-baseline gap-[3px] text-[18px] font-bold leading-[18px] text-[#ef3b5b]">
        4.862,05
        <span className="text-[7px] font-normal text-[#d6d6d6]">USD</span>
      </p>
      <p className="text-[9px] font-bold leading-[13px] text-[#2bb17f]">
        +98,92 <span className="ml-[2px]">+2,08%</span>
      </p>
      <p className="flex items-center gap-[3px] leading-[13px] text-[#2bb17f]">
        <span className="ml-[2px] size-[5px] rounded-full bg-[#2bb17f]" />
        Mercado abierto
      </p>
      <button
        type="button"
        className="mr-[10px] mt-[6px] flex h-6 shrink-0 items-center rounded bg-[#33264a] px-[5px] text-left text-[8px] font-bold leading-[10px] text-[#e0dcea]"
      >
        <Zap className="mr-[4px] size-[7px] shrink-0 text-[#a487e0]" />
        <span className="whitespace-nowrap">
          hace 17 horas · La
          <br />
          semana de la bols...
        </span>
        <ChevronRight className="ml-auto size-[9px] shrink-0" />
      </button>
      <h3 className="mt-3 text-[9px] font-bold leading-[14px]">Rendimiento</h3>
      <div className="mr-[9px] mt-[3px] grid shrink-0 grid-cols-3 gap-[5px] text-center font-bold leading-[9px]">
        {performance.map(([value, label]) => (
          <div key={label} className="flex h-6 flex-col justify-center rounded-sm bg-[#174a38]">
            <span className="font-normal text-[#2fae7e]">{value}</span>
            <span className="text-[7px] text-[#d9e6e0]">{label}</span>
          </div>
        ))}
      </div>
      <h3 className="mt-3 text-[9px] font-bold leading-[14px]">Estacionales</h3>
      <svg viewBox="0 0 110 42" preserveAspectRatio="xMinYMin slice" className="mt-1 h-[42px] w-full shrink-0" fill="none" aria-hidden="true">
        <path d="M3.500 0v42M31.500 0v42M59.500 0v42M86.500 0v42" stroke="#424242" strokeDasharray="4 4" />
        <path d="M63 37l3-3 3-7 2-14 2 13 3 9 2-9 2 6 3-6 3-2 2-5 2 2 3-8 2 1 3-10v5" stroke="#2aa24c" strokeWidth="1.200" />
        <path d="M61 38l4-3 2 2 4-5 2-3 3 4 2 7 3-3 2 4 2-8 3 6 2-5 3 7 2-1" stroke="#d9772f" strokeWidth="1.200" />
      </svg>
    </section>
  );
}

function Rail() {
  return (
    <nav className="flex w-7 shrink-0 flex-col items-center border-l border-[#2c2c2c] bg-[#0f0f0f] pb-[2px] pt-[2px] text-[#b8b8b8]">
      <button type="button" aria-label="Lista" className="flex size-[22px] items-center justify-center rounded bg-[#3a3a3a]">
        <Glyph name="bookmark" className="size-[18px]" />
      </button>
      <button type="button" aria-label="Alertas" className="flex h-8 items-center">
        <AlarmClock className="size-4" strokeWidth={1.3} />
      </button>
      <button type="button" aria-label="Objetos" className="flex h-6 items-center">
        <Layers className="size-4" strokeWidth={1.3} />
      </button>
      <button type="button" aria-label="Chats" className="flex h-8 items-center">
        <MessagesSquare className="size-4" strokeWidth={1.3} />
      </button>
      <button type="button" aria-label="Filtros" className="mt-auto flex h-[27px] items-center">
        <Glyph name="radar" className="size-[21px]" />
      </button>
      <div className="relative">
        <button type="button" aria-label="Pine" className="flex h-[27px] items-center">
          <Glyph name="pine" className="size-5" />
        </button>
        {/* pointer */}
        <svg viewBox="0 0 14 18" className="absolute left-2 top-[18px] z-10 h-[18px] w-[14px]" aria-hidden="true">
          <path d="M1 0v14l3.500-3 2.500 6 3-1-2.500-6H12z" fill="#fff" />
        </svg>
      </div>
      <button type="button" aria-label="Calendario" className="flex h-[27px] items-center">
        <Glyph name="calendar" className="size-5" />
      </button>
      <button type="button" aria-label="Noticias" className="flex h-[27px] items-center">
        <Rss className="size-4" strokeWidth={1.3} />
      </button>
      <button type="button" aria-label="Notificaciones" className="flex h-[27px] items-center">
        <Bell className="size-[17px]" strokeWidth={1.3} />
      </button>
      <button type="button" aria-label="Productos" className="my-1 flex size-[21px] items-center justify-center rounded-full bg-white">
        <svg viewBox="0 0 11 11" className="size-[11px]" fill="#111" aria-hidden="true">
          <path d="M0 0h2.600v2.600H0zM4 0h2.600v2.600H4zM8 0h2.600v2.600H8zM0 4h2.600v2.600H0zM4 4h2.600v2.600H4zM8 4h2.600v2.600H8zM0 8h2.600v2.600H0zM4 8h2.600v2.600H4zM8 8h2.600v2.600H8z" />
        </svg>
      </button>
      <span className="mb-[2px] mt-1 h-px w-5 bg-[#3a3a3a]" />
      <button type="button" aria-label="Ayuda" className="flex h-[25px] items-center">
        <CircleHelp className="size-[18px]" strokeWidth={1.3} />
      </button>
    </nav>
  );
}

function TaskButton({ label, running, active, children }: { label: string; running?: boolean; active?: boolean; children: ReactNode }) {
  return (
    <button type="button" aria-label={label} className="relative flex h-12 w-11 items-center justify-center">
      <span className={clsx("flex size-10 items-center justify-center rounded", active && "bg-white/10")}>{children}</span>
      {active ? <span className="absolute bottom-1 h-[3px] w-4 rounded-full bg-[#6fb1e8]" /> : null}
      {running ? <span className="absolute bottom-1 h-[3px] w-[6px] rounded-full bg-[#b391a8]" /> : null}
    </button>
  );
}

function Taskbar() {
  return (
    <footer className="flex h-12 shrink-0 items-center bg-linear-to-r from-[#350d38] via-[#380d2c] to-[#3f0f16] font-['Open_Sans','Noto_Sans',sans-serif] text-xs text-white">
      <div className="w-[303px] shrink-0 pl-5">
        <button type="button" aria-label="Tiempo" className="relative block h-8 w-8">
          <svg viewBox="0 0 32 32" className="size-8" aria-hidden="true">
            <path d="M12 4c0 6-5 10-11 11 3 5 10 5 14 0s1-9-3-11z" fill="#eba03c" />
            <path d="M5 28c-7-1-5-9 1-9 2-7 12-7 13-1 7 0 6 10 0 10z" fill="#b5d0f5" />
          </svg>
          <span className="absolute left-[11px] top-0 flex size-4 items-center justify-center rounded-full bg-[#f08a93] text-[11px] text-[#3a1018]">6</span>
        </button>
      </div>
      <TaskButton label="Inicio">
        <svg viewBox="0 0 24 24" className="size-6" aria-hidden="true">
          <path d="M0 0h11.500v11.500H0zM12.500 0H24v11.500H12.500z" fill="#6fd8fb" />
          <path d="M0 12.500h11.500V24H0zM12.500 12.500H24V24H12.500z" fill="#35b5f2" />
        </svg>
      </TaskButton>
      <TaskButton label="Buscar">
        <svg viewBox="0 0 24 24" className="size-6" aria-hidden="true">
          <circle cx="11" cy="11" r="9" fill="#5d3a5a" stroke="#f4e6f4" strokeWidth="2.200" />
          <path d="M17.500 17.500l5 5" stroke="#f4e6f4" strokeWidth="3" />
        </svg>
      </TaskButton>
      <TaskButton label="Vista de tareas">
        <svg viewBox="0 0 24 24" className="size-6" aria-hidden="true">
          <path d="M6 1h18v16H6z" fill="#ededed" />
          <path d="M0 7h17v15H0z" fill="#6c6c6c" />
          <path d="M6 7h11v10H6z" fill="#b9b9b9" />
        </svg>
      </TaskButton>
      <TaskButton label="Edge">
        <svg viewBox="0 0 24 24" className="size-6" aria-hidden="true">
          <circle cx="12" cy="12" r="12" fill="#1b79cf" />
          <path d="M1 9C3 2 9 0 13 0c7 0 11 5 11 10 0 4-3 6-6 6-5 0-3-3-4-5-2-4-9-5-13-2z" fill="#40cfa6" />
          <path d="M1 9c5-5 12-2 13 2-4-1-6 3-5 6s5 5 10 4c-5 5-13 3-16-2S0 12 1 9z" fill="#1c8fe0" />
          <path d="M9 17c-1-3 1-7 5-6-1 2 0 5 4 5 3 0 4 0 5-1-1 3-3 5-5 6-4 1-8-1-9-4z" fill="#103c7c" />
        </svg>
      </TaskButton>
      <TaskButton label="Store">
        <svg viewBox="0 0 24 24" className="size-6" aria-hidden="true">
          <path d="M7 5V1h10v4" fill="none" stroke="#4db4e8" strokeWidth="1.500" />
          <rect y="4" width="24" height="20" rx="2" fill="#f2f2f2" />
          <path d="M7 8h4.500v4.500H7z" fill="#e0532c" />
          <path d="M12.500 8H17v4.500h-4.500z" fill="#7db32b" />
          <path d="M7 13.500h4.500V18H7z" fill="#2b9fe0" />
          <path d="M12.500 13.500H17V18h-4.500z" fill="#f0b323" />
        </svg>
      </TaskButton>
      <TaskButton label="M365">
        <span className="relative flex size-6 flex-col">
          <svg viewBox="0 0 24 18" className="h-[18px] w-6" aria-hidden="true">
            <path d="M7 1h8c-3 2-3 13-6 10H3l2-8c0-1 1-2 2-2z" fill="#4a9cf0" />
            <path d="M3 8h7l-1 6c-1 4-6 4-8 1-1-2 0-5 2-7z" fill="#b9c24a" />
            <path d="M14 1c3 0 4 2 5 6h-5l-2 6H9c3-1 2-12 5-12z" fill="#2b5fd0" />
            <path d="M14 7h8c3 1 2 5 0 9-1 2-3 2-4 2h-8c2-1 3-8 4-11z" fill="#c65ad8" />
            <path d="M16 11h7l-1 5-4 2h-5z" fill="#ef7a9a" />
          </svg>
          <span className="absolute bottom-0 left-[7px] bg-black text-[6px] font-bold leading-[7px]">M365</span>
        </span>
      </TaskButton>
      <TaskButton label="Chrome" running>
        <svg viewBox="0 0 24 24" className="size-6" aria-hidden="true">
          <circle cx="12" cy="12" r="12" fill="#f4c20d" />
          <path d="M12 6h10.400A12 12 0 0 0 1.600 6l5.200 9z" fill="#e33b2e" />
          <path d="M1.600 6A12 12 0 0 0 12 24l5.200-9H6.800z" fill="#2ba24c" />
          <circle cx="12" cy="12" r="6" fill="#fff" />
          <circle cx="12" cy="12" r="4.600" fill="#3f7fee" />
        </svg>
      </TaskButton>
      <TaskButton label="Telegram">
        <span className="relative">
          <svg viewBox="0 0 24 24" className="size-6" aria-hidden="true">
            <circle cx="12" cy="12" r="12" fill="#2f9be0" />
            <path d="M4 12l14-6-2 12-5-3-2 2v-4l6-5-8 5z" fill="#fff" />
          </svg>
          <span className="absolute -top-[5px] left-[9px] flex h-4 w-[27px] items-center justify-center rounded-full bg-[#55b8ec] text-[11px] text-[#0d2233]">99+</span>
        </span>
      </TaskButton>
      <TaskButton label="Explorador">
        <svg viewBox="0 0 24 24" className="size-6" aria-hidden="true">
          <path d="M0 3q0-2 2-2h7l2 3h11q2 0 2 2v4H0z" fill="#d99a26" />
          <path d="M0 6h24v16q0 1-1 1H1q-1 0-1-1z" fill="#f8d158" />
          <path d="M4 18q0-2 2-2h12q2 0 2 2v5H4z" fill="#1c79c4" />
          <path d="M8 19h8" stroke="#0d4a86" />
        </svg>
      </TaskButton>
      <TaskButton label="WhatsApp">
        <span className="relative">
          <FaWhatsapp className="size-[26px] text-[#35c759]" />
          <span className="absolute -top-1 left-[13px] flex h-4 w-5 items-center justify-center rounded-full bg-[#55b8ec] text-[11px] text-[#0d2233]">30</span>
        </span>
      </TaskButton>
      <TaskButton label="Power BI">
        <svg viewBox="0 0 24 24" className="size-6" aria-hidden="true">
          <path d="M13 0h8v24h-8z" fill="#cf9a14" />
          <path d="M8 6h8v18H8z" fill="#e8bd2a" />
          <path d="M3 12h8v12H3z" fill="#f6dc62" />
        </svg>
      </TaskButton>
      <TaskButton label="TradingView" active>
        <svg viewBox="0 0 24 24" className="size-6" aria-hidden="true">
          <rect width="24" height="24" rx="4" fill="#0f0f10" />
          <path d="M2 8h9v9H7v-5H2zM14 8a1.900 1.900 0 1 0 .1 0zM17 8h5L18.500 17H14z" fill="#fff" />
        </svg>
      </TaskButton>
      <TaskButton label="OBS" running>
        <span className="relative">
          <svg viewBox="0 0 24 24" className="size-[23px]" fill="none" aria-hidden="true">
            <circle cx="12" cy="12" r="11" fill="#29292b" stroke="#dcdcdc" strokeWidth="1.300" />
            <path d="M12 12c-4-1-6-4-4-8M12 12c3-3 7-2 8 2M12 12c1 4-1 7-6 6" stroke="#c9c9c9" strokeWidth="2" />
          </svg>
          <span className="absolute -right-1 -top-[2px] size-3 rounded-full bg-[#f20d0d]" />
        </span>
      </TaskButton>
      <div className="ml-auto flex items-center pr-5">
        <ChevronUp className="size-[14px]" strokeWidth={2.5} />
        <svg viewBox="0 0 20 20" className="ml-4 size-5" fill="none" stroke="#d8c4c8" strokeWidth="1.500" aria-hidden="true">
          <path d="M3 9a7 7 0 0 1 12-4l2 2M17 2v5h-5M3 17v-5h5M3 13c2 3 5 4 8 4" />
          <circle cx="14" cy="14" r="4.500" fill="#1b76d4" stroke="none" />
        </svg>
        <svg viewBox="0 0 18 13" className="ml-[13px] h-[13px] w-[18px]" aria-hidden="true">
          <path d="M4 12.500C-1 12 0 6 4 6c1-7 10-7 11-1 4 1 3 7 0 7.500z" fill="#e6dcde" />
          <path d="M6 12l8-6" stroke="#b3a4a8" strokeWidth="2" />
        </svg>
        <Mic className="ml-[14px] size-[18px] text-[#c6dcea]" strokeWidth={1.8} />
        <span className="ml-[19px] text-center leading-4">
          ESP
          <br />
          LAA
        </span>
        <Wifi className="ml-[19px] size-[17px]" />
        <Volume2 className="ml-2 size-[17px]" strokeWidth={1.8} />
        <svg viewBox="0 0 20 14" className="ml-2 h-[14px] w-5" aria-hidden="true">
          <rect x="0.500" y="2.500" width="16" height="10" rx="2.500" fill="none" stroke="#f0f0f0" />
          <path d="M17.500 5.500q2 0 2 2t-2 2z" fill="#f0f0f0" />
          <path d="M2 4h9v7H2z" fill="#a8dfb4" />
          <path d="M9 0L5 7h3l-1 5 5-7H9z" fill="#fff" stroke="#3f0f16" strokeWidth="0.600" />
        </svg>
        <span className="ml-[14px] text-right leading-4">
          0:40
          <br />
          21-01-2026
        </span>
      </div>
    </footer>
  );
}

export default function App() {
  return (
    <div className="flex h-screen flex-col overflow-hidden bg-[#0f0f0f] font-['Lato','Noto_Sans',sans-serif]">
      <TitleBar />
      <Toolbar />
      <main className="flex min-h-0 flex-1 border-t-2 border-[#2c2c2c]">
        <DrawingTools />
        <div className="flex min-w-0 flex-1 flex-col">
          <ChartArea />
          <BottomBars />
        </div>
        <div className="relative flex w-[124px] shrink-0 flex-col border-l-4 border-[#2e2e30] bg-[#0f0f0f]">
          <Watchlist />
          <SymbolDetails />
          <button
            type="button"
            aria-label="Ocultar panel"
            className="absolute -left-[2px] bottom-9 flex h-[14px] w-[6px] items-center justify-center rounded-r-sm bg-[#0f0f0f] text-[#c4c4c4]"
          >
            <ChevronRight className="size-[6px]" />
          </button>
        </div>
        <Rail />
      </main>
      <Taskbar />
    </div>
  );
}
